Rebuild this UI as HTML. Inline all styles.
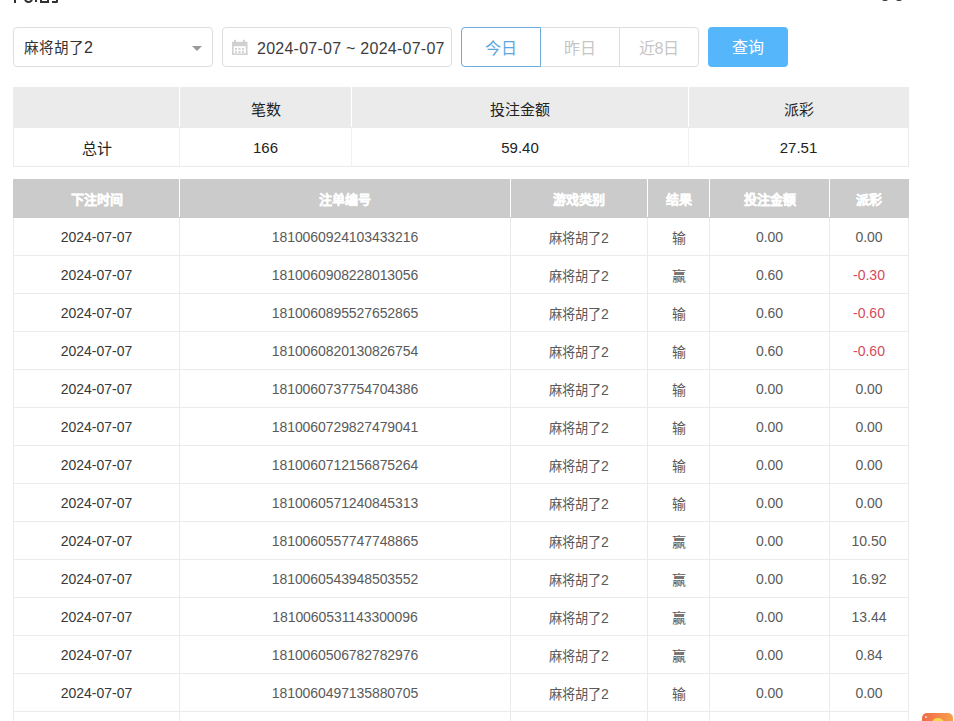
<!DOCTYPE html>
<html lang="zh-CN"><head><meta charset="utf-8">
<style>
*{box-sizing:border-box;margin:0;padding:0}
html,body{width:954px;height:721px;overflow:hidden;background:#fff}
body{font-family:"Liberation Sans",sans-serif;color:#333;position:relative}
.title{position:absolute;left:13px;top:-14px;font-size:18px;color:#303133;font-weight:bold}
.sel{position:absolute;left:13px;top:27px;width:200px;height:40px;border:1px solid #dedede;border-radius:4px;font-size:15px;line-height:40px;padding-left:10px;color:#333}
.sel .arr{position:absolute;right:10px;top:18px;width:0;height:0;border-left:5px solid transparent;border-right:5px solid transparent;border-top:5px solid #9a9a9a}
.date{position:absolute;left:222px;top:27px;width:230px;height:40px;border:1px solid #dedede;border-radius:4px;font-size:16px;line-height:41px;padding-left:34px;letter-spacing:0.25px;color:#3c3c3c}
.date svg{position:absolute;left:9px;top:11px}
.bg{position:absolute;top:27px;height:40px;font-size:16px;line-height:41px;text-align:center;border:1px solid #dedede;color:#c6c6c6}
.b1{left:461px;width:80px;border-color:#6aacdc;color:#5ea6df;border-radius:4px 0 0 4px;z-index:2}
.b2{left:540px;width:80px;}
.b3{left:619px;width:80px;border-radius:0 4px 4px 0}
.q{position:absolute;left:708px;top:27px;width:80px;height:40px;background:#56b6fc;color:#fff;border-radius:4px;font-size:16px;line-height:42px;text-align:center}
table{border-collapse:collapse;position:absolute;left:13px;table-layout:fixed}
td,th{text-align:center;border:1px solid #ebebeb;font-size:15px;font-weight:normal}
.sum{top:87px;width:896px}
.sum th{background:#ebebeb;height:40px;color:#222;border-color:#fff;border-top-color:#ebebeb;border-bottom-color:#ebebeb;padding-top:2px}
.sum th:first-child{border-left-color:#ebebeb}.sum th:last-child{border-right-color:#ebebeb}
.sum td{color:#222;border-left-color:#f1f1f1;border-right-color:#f1f1f1}
.sum td:first-child{border-left-color:#ebebeb}.sum td:last-child{border-right-color:#ebebeb}
.data td:nth-child(2){letter-spacing:-0.08px}
.sum td{height:39px}
.data{top:179px;width:896px}
.data th{background:#cbcbcb;color:#fff;height:38px;font-weight:bold;font-size:13px;-webkit-text-stroke:0.35px #fff;border-color:#fff;border-top-color:#cbcbcb;border-bottom-color:#cbcbcb}
.data th:first-child{border-left-color:#cbcbcb}.data th:last-child{border-right-color:#cbcbcb}
.data td{height:38px;color:#5a5a5a;font-size:14px}
.data td:first-child{color:#383838}
.data td.red{color:#d84a5c}
.data td:nth-child(3){padding-top:1px}
.g{font-size:13.2px}
</style></head><body>
<div style="position:absolute;left:14px;top:-1px;width:2px;height:4px;background:#303133"></div>
<div style="position:absolute;left:24px;top:-6px;width:9px;height:9px;border:2px solid #303133;border-radius:50%"></div>
<div style="position:absolute;left:35px;top:0px;width:2px;height:2px;background:#303133"></div>
<div style="position:absolute;left:40px;top:-4px;width:9px;height:7px;border:2px solid #303133;border-top:none"></div>
<div style="position:absolute;left:52px;top:-4px;width:6px;height:7px;border:2px solid #303133;border-top:none;border-left:none;border-radius:0 0 2px 0"></div>
<div style="position:absolute;left:882px;top:-2px;width:6px;height:3px;background:#333;border-radius:50%"></div>
<div style="position:absolute;left:896px;top:-2px;width:6px;height:3px;background:#333;border-radius:50%"></div>
<div style="position:absolute;left:922px;top:713px;width:31px;height:12px;background:linear-gradient(90deg,#f06a4a,#f7a04a);border-radius:5px"><div style="position:absolute;left:10px;top:5px;width:12px;height:10px;border-radius:50%;background:#f7d64a"></div><div style="position:absolute;left:3px;top:3px;width:2px;height:2px;background:#fde0d0;border-radius:1px"></div></div>
<div class="sel"><span style="font-size:14.6px">麻将胡了</span><span style="font-size:16px">2</span><span class="arr"></span></div>
<div class="date"><svg width="16" height="17" viewBox="0 0 16 17"><g fill="#d0d0d0"><rect x="2" y="0.8" width="2" height="2.5"/><rect x="11" y="0.8" width="2" height="2.5"/><rect x="0" y="2.8" width="15.5" height="4.4"/><rect x="0" y="7" width="1.6" height="9"/><rect x="13.9" y="7" width="1.6" height="9"/><rect x="0" y="14.4" width="15.5" height="1.5"/><rect x="3" y="9" width="2" height="1.8"/><rect x="6.5" y="9" width="2" height="1.8"/><rect x="10" y="9" width="2" height="1.8"/><rect x="3" y="12" width="2" height="1.8"/><rect x="6.5" y="12" width="2" height="1.8"/><rect x="10" y="12" width="2" height="1.8"/></g></svg>2024-07-07 ~ 2024-07-07</div>
<div class="bg b1">今日</div>
<div class="bg b2">昨日</div>
<div class="bg b3">近8日</div>
<div class="q">查询</div>
<table class="sum">
<colgroup><col style="width:166px"><col style="width:172px"><col style="width:337px"><col style="width:220px"></colgroup>
<tr><th></th><th>笔数</th><th>投注金额</th><th>派彩</th></tr>
<tr><td>总计</td><td>166</td><td>59.40</td><td>27.51</td></tr>
</table>
<table class="data">
<colgroup><col style="width:166px"><col style="width:331px"><col style="width:137px"><col style="width:62px"><col style="width:120px"><col style="width:79px"></colgroup>
<tr><th>下注时间</th><th>注单编号</th><th>游戏类别</th><th>结果</th><th>投注金额</th><th>派彩</th></tr>
<tr><td>2024-07-07</td><td>1810060924103433216</td><td><span class="g">麻将胡了</span>2</td><td>输</td><td>0.00</td><td>0.00</td></tr>
<tr><td>2024-07-07</td><td>1810060908228013056</td><td><span class="g">麻将胡了</span>2</td><td>赢</td><td>0.60</td><td class="red">-0.30</td></tr>
<tr><td>2024-07-07</td><td>1810060895527652865</td><td><span class="g">麻将胡了</span>2</td><td>输</td><td>0.60</td><td class="red">-0.60</td></tr>
<tr><td>2024-07-07</td><td>1810060820130826754</td><td><span class="g">麻将胡了</span>2</td><td>输</td><td>0.60</td><td class="red">-0.60</td></tr>
<tr><td>2024-07-07</td><td>1810060737754704386</td><td><span class="g">麻将胡了</span>2</td><td>输</td><td>0.00</td><td>0.00</td></tr>
<tr><td>2024-07-07</td><td>1810060729827479041</td><td><span class="g">麻将胡了</span>2</td><td>输</td><td>0.00</td><td>0.00</td></tr>
<tr><td>2024-07-07</td><td>1810060712156875264</td><td><span class="g">麻将胡了</span>2</td><td>输</td><td>0.00</td><td>0.00</td></tr>
<tr><td>2024-07-07</td><td>1810060571240845313</td><td><span class="g">麻将胡了</span>2</td><td>输</td><td>0.00</td><td>0.00</td></tr>
<tr><td>2024-07-07</td><td>1810060557747748865</td><td><span class="g">麻将胡了</span>2</td><td>赢</td><td>0.00</td><td>10.50</td></tr>
<tr><td>2024-07-07</td><td>1810060543948503552</td><td><span class="g">麻将胡了</span>2</td><td>赢</td><td>0.00</td><td>16.92</td></tr>
<tr><td>2024-07-07</td><td>1810060531143300096</td><td><span class="g">麻将胡了</span>2</td><td>赢</td><td>0.00</td><td>13.44</td></tr>
<tr><td>2024-07-07</td><td>1810060506782782976</td><td><span class="g">麻将胡了</span>2</td><td>赢</td><td>0.00</td><td>0.84</td></tr>
<tr><td>2024-07-07</td><td>1810060497135880705</td><td><span class="g">麻将胡了</span>2</td><td>输</td><td>0.00</td><td>0.00</td></tr>
<tr><td></td><td></td><td></td><td></td><td></td><td></td></tr>
</table>
</body></html>
